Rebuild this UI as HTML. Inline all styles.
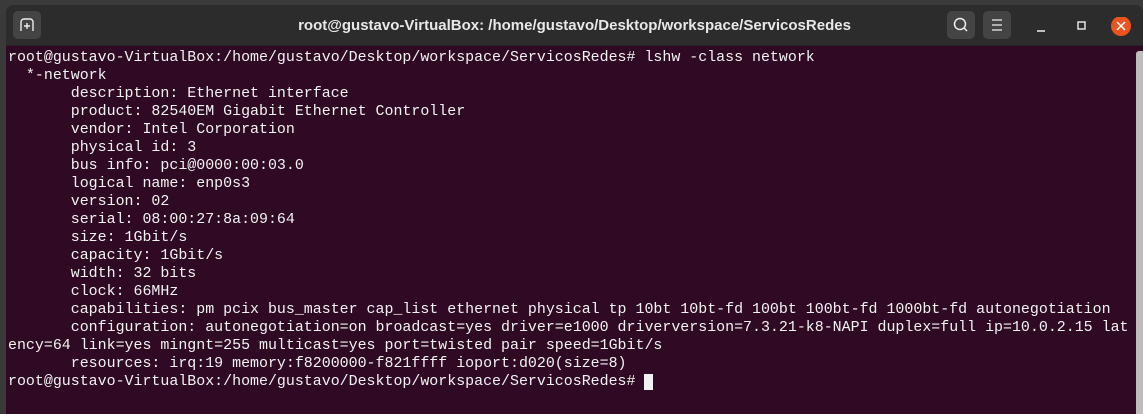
<!DOCTYPE html>
<html><head><style>
body{margin:0;width:1143px;height:414px;background:#3a3a3a;overflow:hidden;position:relative;font-family:"Liberation Sans",sans-serif}
.win{position:absolute;left:6px;top:5px;width:1137px;height:409px;background:#300a24;border-radius:8px 8px 0 0;overflow:hidden}
.hdr{height:40px;background:#2c2c2c;position:relative;border-bottom:1px solid #222}
.title{position:absolute;left:0;right:0;top:12px;text-align:center;color:#e8e8e8;font-weight:bold;font-size:15px}
.btn{position:absolute;top:6px;width:28px;height:28px;background:#444;border-radius:5px}
pre{margin:0;position:absolute;left:2px;top:44px;font-family:"Liberation Mono",monospace;font-size:14.95px;letter-spacing:0;line-height:18px;color:#f2f2f2}
.cur{background:#f2f2f2;color:#300a24}
.sb{position:absolute;right:0;top:46px;width:7px;height:368px;background:#bdbdbd;border-radius:3px 0 0 0}
</style></head><body>
<div class="win">
<div class="hdr">
<div class="btn" style="left:7px"><svg width="28" height="28"><path d="M8 20V11a3 3 0 0 1 3-3h6a3 3 0 0 1 3 3v9M11 15h6M14 12v6" fill="none" stroke="#eee" stroke-width="1.4"/></svg></div>
<div class="title">root@gustavo-VirtualBox: /home/gustavo/Desktop/workspace/ServicosRedes</div>
<div class="btn" style="left:941px"><svg width="28" height="28"><circle cx="13" cy="13" r="5.5" fill="none" stroke="#eee" stroke-width="1.5"/><path d="M17 17l3 3" stroke="#eee" stroke-width="1.5"/></svg></div>
<div class="btn" style="left:977px"><svg width="28" height="28"><path d="M9 9h10M9 14h10M9 19h10" stroke="#eee" stroke-width="1.3"/></svg></div>
<svg style="position:absolute;left:1030px;top:12px" width="100" height="22"><path d="M1 14h8" stroke="#eee" stroke-width="1.5"/><rect x="42" y="5" width="7" height="7" fill="none" stroke="#eee" stroke-width="1.4"/><circle cx="85" cy="9" r="10" fill="#e9541f"/><path d="M81 5l8 8M89 5l-8 8" stroke="#fff" stroke-width="1.5"/></svg>
</div>
<pre>root@gustavo-VirtualBox:/home/gustavo/Desktop/workspace/ServicosRedes# lshw -class network
  *-network
       description: Ethernet interface
       product: 82540EM Gigabit Ethernet Controller
       vendor: Intel Corporation
       physical id: 3
       bus info: pci@0000:00:03.0
       logical name: enp0s3
       version: 02
       serial: 08:00:27:8a:09:64
       size: 1Gbit/s
       capacity: 1Gbit/s
       width: 32 bits
       clock: 66MHz
       capabilities: pm pcix bus_master cap_list ethernet physical tp 10bt 10bt-fd 100bt 100bt-fd 1000bt-fd autonegotiation
       configuration: autonegotiation=on broadcast=yes driver=e1000 driverversion=7.3.21-k8-NAPI duplex=full ip=10.0.2.15 lat
ency=64 link=yes mingnt=255 multicast=yes port=twisted pair speed=1Gbit/s
       resources: irq:19 memory:f8200000-f821ffff ioport:d020(size=8)
root@gustavo-VirtualBox:/home/gustavo/Desktop/workspace/ServicosRedes# <span class="cur"> </span></pre>
<div class="sb"></div>
</div>
</body></html>
